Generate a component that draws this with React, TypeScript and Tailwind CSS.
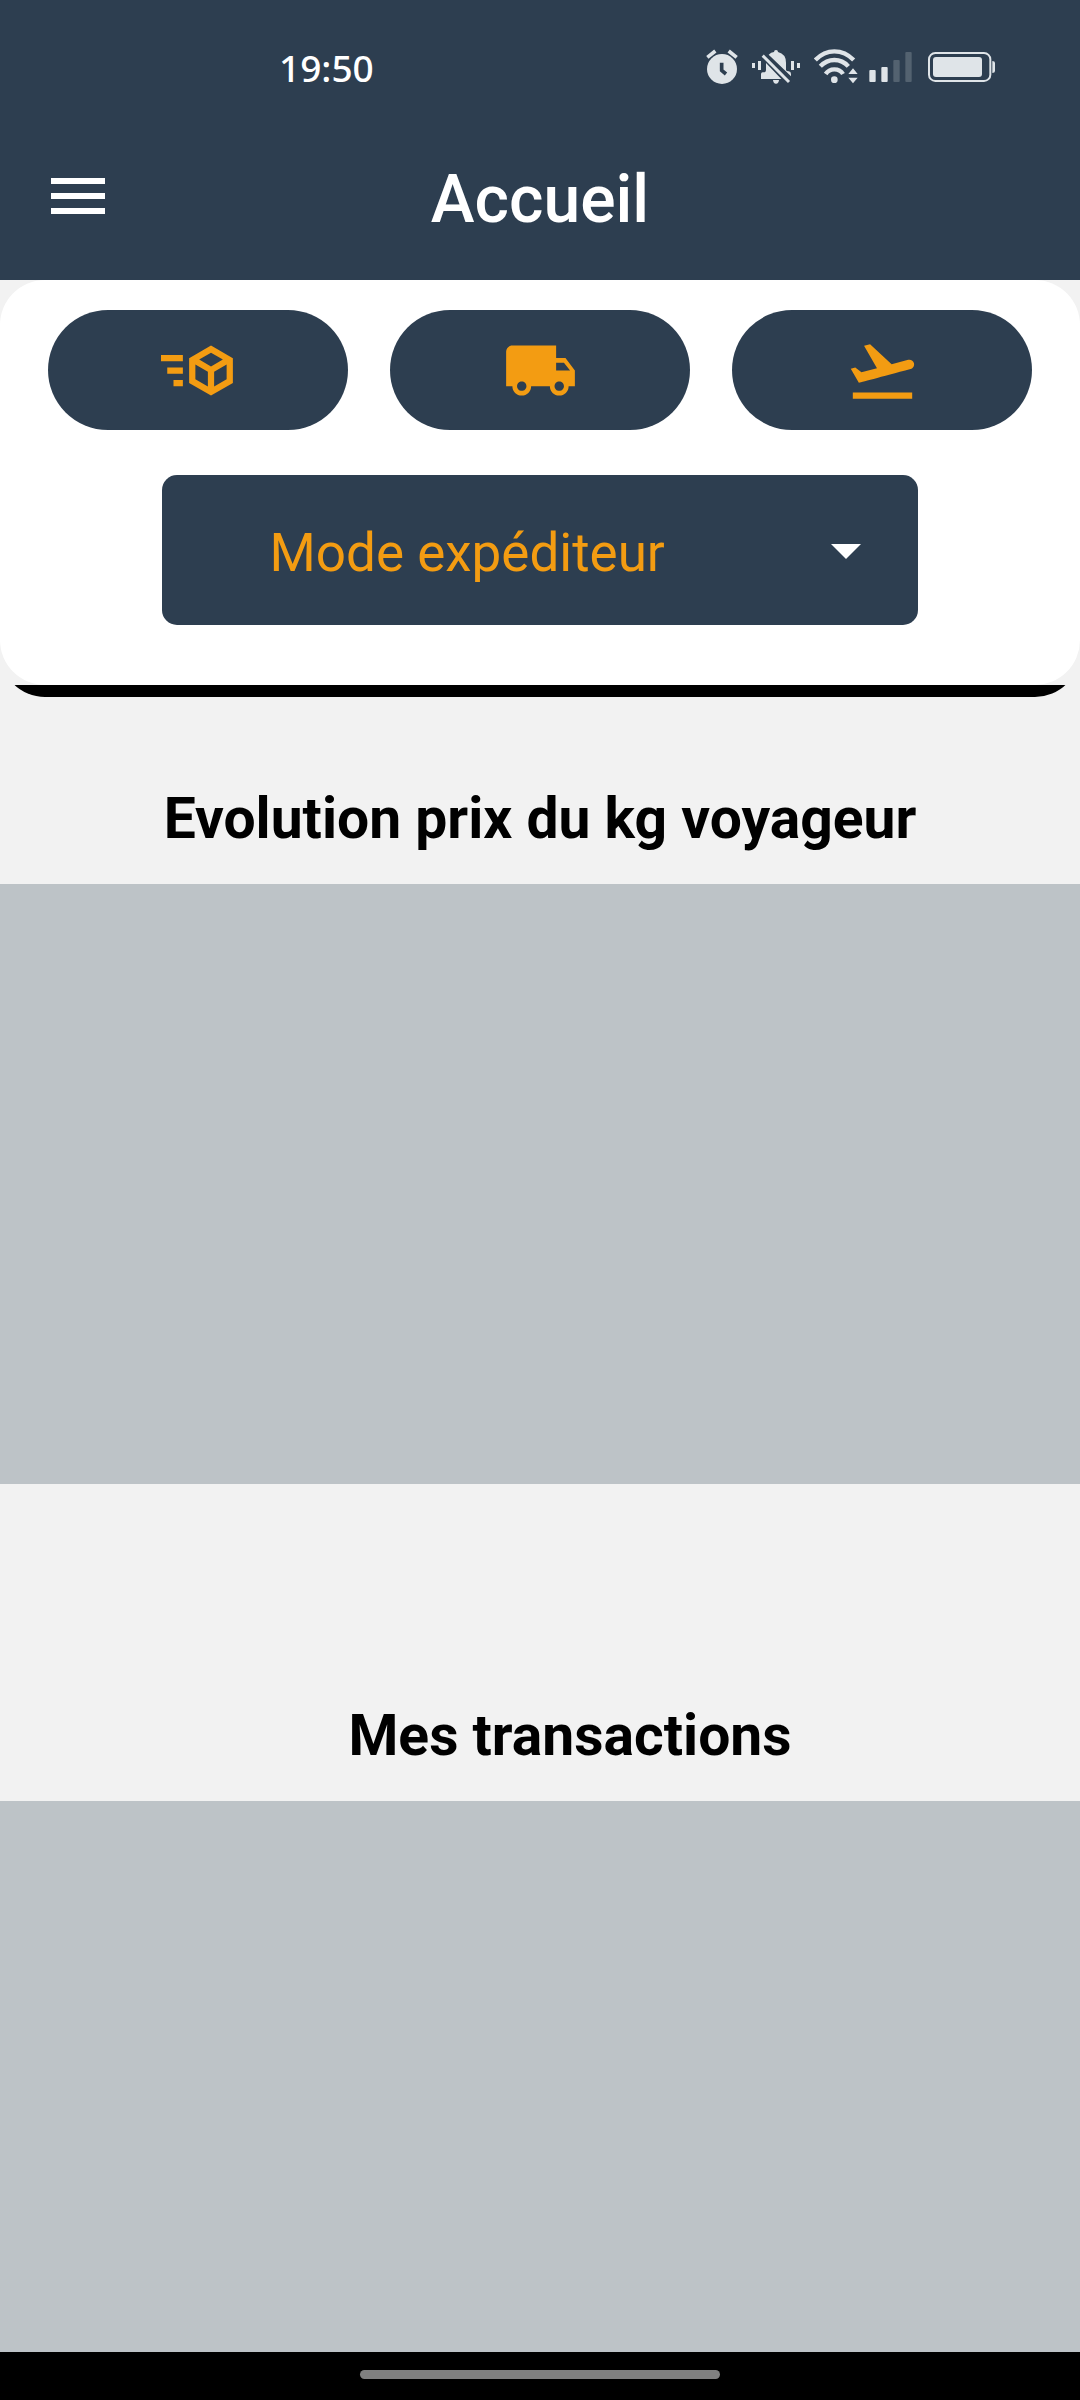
import React from "react";
import { MdArrowDropDown, MdFlightTakeoff, MdLocalShipping, MdMenu } from "react-icons/md";

function AlarmIcon() {
  return (
    <svg viewBox="48 54 96 108" className="h-9 w-8" aria-hidden="true">
      <circle cx="96" cy="117" r="45" fill="#dfe4e8" />
      <path d="M52 82 76 63M140 82 116 63" stroke="#dfe4e8" strokeWidth="11" />
      <path d="M95 98V121L108 132" stroke="#2d3e50" strokeWidth="11" fill="none" />
    </svg>
  );
}

function MutedBellIcon() {
  return (
    <svg viewBox="186 54 144 108" className="h-9 w-12" aria-hidden="true">
      <g fill="#dfe4e8">
        <path d="M186 99h9v15h-9zM204 93h9v27h-9zM303 93h9v27h-9zM321 99h9v15h-9z" />
        <path d="M213 147V132Q213 127 218 127H224Q228 125 228 120V99L274 147Z" />
        <path d="M236 74Q243 67 252 66Q252 60 258 60Q264 60 264 66Q288 72 288 98V120Q289 124 296 124Q303 125 303 132V139Z" />
        <path d="M249 150H267Q266 161 258 161Q250 161 249 150Z" />
      </g>
      <path d="M218 77 297 156" stroke="#dfe4e8" strokeWidth="9" />
    </svg>
  );
}

function WifiIcon() {
  return (
    <svg viewBox="372 54 132 108" className="h-9 w-11" aria-hidden="true">
      <g fill="none" stroke="#dfe4e8" strokeWidth="13">
        <path d="M376 90Q401 64 433 64Q466 64 491 90" />
        <path d="M391 109Q409 90 433 90Q458 90 475 109" />
        <path d="M407 132Q416 118 433 118Q451 118 459 132" />
      </g>
      <circle cx="433" cy="149" r="10" fill="#dfe4e8" />
      <path d="M489 115 503 132H475ZM489 160 475 143H503Z" fill="#dfe4e8" />
    </svg>
  );
}

function SignalIcon() {
  return (
    <svg viewBox="537 54 129 108" className="h-9 w-[43px]" aria-hidden="true">
      <g fill="#dfe4e8">
        <rect x="538" y="120" width="19" height="36" rx="3" />
        <rect x="574" y="111" width="19" height="45" rx="3" />
      </g>
      <g fill="#536270">
        <rect x="610" y="90" width="19" height="66" rx="3" />
        <rect x="646" y="66" width="19" height="90" rx="3" />
      </g>
    </svg>
  );
}

function BatteryIcon() {
  return (
    <svg viewBox="714 54 201 108" className="h-9 w-[67px]" aria-hidden="true">
      <rect x="717" y="69" width="184" height="84" rx="19" fill="none" stroke="#dfe4e8" strokeWidth="6" />
      <rect x="729" y="81" width="147" height="60" rx="9" fill="#dfe4e8" />
      <path d="M907 93Q915 93 915 99V123Q915 129 907 129Z" fill="#dfe4e8" />
    </svg>
  );
}

function CubeSendIcon() {
  return (
    <svg viewBox="0 0 24 24" className="size-[75px]" fill="currentColor" aria-hidden="true">
      <path d="M16,4L9,8.04V15.96L16,20L23,15.96V8.04M16,6.31L19.8,8.5L16,10.69L12.21,8.5M0,7V9H7V7M11,10.11L15,12.42V17.11L11,14.81M21,10.11V14.81L17,17.11V12.42M2,11V13H7V11M4,15V17H7V15" />
    </svg>
  );
}

function PillButton({ label, children }: { label: string; children: React.ReactNode }) {
  return (
    <button
      type="button"
      aria-label={label}
      className="flex h-[120px] flex-1 items-center justify-center rounded-full bg-[#2d3e50] text-[#f39c12]"
    >
      {children}
    </button>
  );
}

function StatusBar() {
  return (
    <div className="flex h-[132px] items-center justify-between pt-1 pr-[85px] pl-[279px]">
      <span className="font-['Noto_Sans',sans-serif] text-[37px] leading-[44px] font-medium">19:50</span>
      <div className="flex items-center pb-1">
        <div className="flex items-center gap-[14px]">
          <AlarmIcon />
          <MutedBellIcon />
          <WifiIcon />
        </div>
        <div className="ml-[11px] flex items-center gap-4">
          <SignalIcon />
          <BatteryIcon />
        </div>
      </div>
    </div>
  );
}

export default function App() {
  return (
    <div className="flex min-h-screen flex-col bg-[#f2f2f2] font-[Roboto,sans-serif] text-black">
      <header className="bg-[#2d3e50] text-white">
        <StatusBar />
        <div className="grid h-[148px] grid-cols-[1fr_auto_1fr] items-start px-[42px] pt-7">
          <button type="button" aria-label="Menu" className="size-[72px]">
            <MdMenu className="size-[72px]" />
          </button>
          <h1 className="text-[66px] leading-[80px] font-medium">Accueil</h1>
        </div>
      </header>

      <main className="flex flex-1 flex-col">
        <div className="overflow-hidden rounded-b-[45px]">
          <section className="rounded-[45px] bg-white px-12 pt-[30px] pb-[60px]">
            <div className="flex gap-[42px]">
              <PillButton label="Envois">
                <CubeSendIcon />
              </PillButton>
              <PillButton label="Livraisons">
                <MdLocalShipping className="size-[75px]" />
              </PillButton>
              <PillButton label="Voyages">
                <MdFlightTakeoff className="size-[75px]" />
              </PillButton>
            </div>
            <div className="relative mx-auto mt-[45px] w-10/13">
              <select
                aria-label="Mode"
                className="block h-[150px] w-full appearance-none rounded-[15px] bg-[#2d3e50] pt-1.5 pr-[108px] pl-[108px] text-[53px] leading-[64px] text-[#f39c12]"
              >
                <option>Mode expéditeur</option>
              </select>
              <MdArrowDropDown className="pointer-events-none absolute inset-y-0 right-9 my-auto size-[72px] text-white" />
            </div>
          </section>
          <div className="h-3 bg-black" />
        </div>

        <section>
          <h2 className="pt-[86px] pb-[30px] text-center text-[57px] leading-[71px] font-bold">
            Evolution prix du kg voyageur
          </h2>
          <div className="h-[600px] bg-[#bdc3c7]" />
        </section>

        <section className="flex flex-1 flex-col">
          <h2 className="pt-[216px] pb-[30px] pl-[60px] text-center text-[57px] leading-[71px] font-bold">
            Mes transactions
          </h2>
          <div className="flex-1 bg-[#bdc3c7]" />
        </section>
      </main>

      <footer className="flex h-12 justify-center bg-black pt-[18px]">
        <div className="h-[9px] w-1/3 rounded-full bg-[#808080]" />
      </footer>
    </div>
  );
}
